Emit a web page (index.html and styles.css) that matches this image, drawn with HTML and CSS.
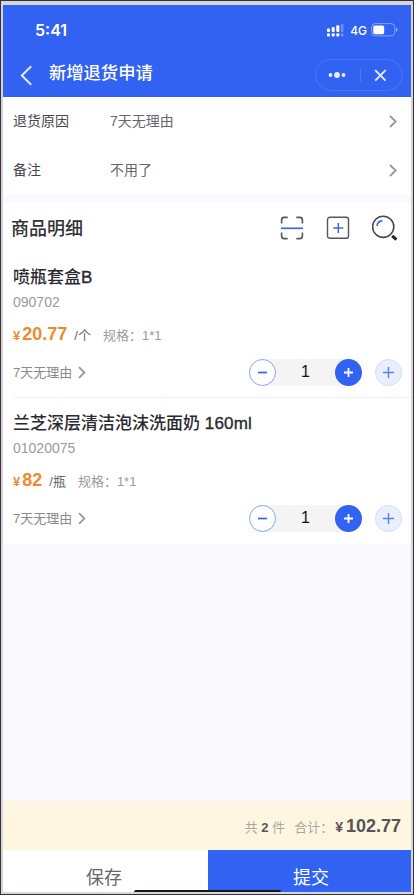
FILE: index.html
```html
<!DOCTYPE html>
<html lang="zh-CN">
<head>
<meta charset="utf-8">
<title>新增退货申请</title>
<link rel="stylesheet" href="styles.css">
</head>
<body>
<div class="frame">
<div class="screen">
  <header class="header">
    <div class="status">
      <span class="time">5:41</span>
      <svg class="signal" width="17" height="13" viewBox="0 0 17 13"><g fill="#fff"><rect x="0" y="4.5" width="3" height="3.5" rx="1"/><rect x="4.7" y="3" width="3" height="5" rx="1"/><rect x="9.3" y="1.2" width="3" height="6.8" rx="1"/><rect x="0" y="9.2" width="3" height="3.3" rx="1"/><rect x="4.7" y="9.2" width="3" height="3.3" rx="1"/><rect x="9.3" y="9.2" width="3" height="3.3" rx="1"/></g><g fill="#fff" opacity=".3"><rect x="13.8" y="0" width="2.6" height="8" rx="1"/><rect x="13.8" y="9.2" width="2.6" height="3.3" rx="1"/></g></svg>
      <span class="network">4G</span>
      <svg class="battery" width="27" height="14" viewBox="0 0 27 14"><rect x=".6" y=".6" width="23.2" height="12.3" rx="3.6" fill="none" stroke="#fff" stroke-opacity=".4"/><rect x="2.2" y="2.4" width="11" height="8.8" rx="1.6" fill="#fff"/><path d="M25 4.8q1.6.5 1.6 2t-1.6 2z" fill="#fff" opacity=".5"/></svg>
    </div>
    <div class="nav">
      <svg class="back" width="13" height="21" viewBox="0 0 13 21"><path d="M11.2 1.2 1.8 10.5l9.4 9.3" fill="none" stroke="#e9eeff" stroke-width="1.9"/></svg>
      <h1>新增退货申请</h1>
      <div class="capsule">
        <svg width="18" height="8" viewBox="0 0 18 8" fill="#e9eeff"><circle cx="2.5" cy="4" r="1.9"/><circle cx="9" cy="4" r="2.9"/><circle cx="15.5" cy="4" r="1.9"/></svg>
        <i></i>
        <svg width="13" height="13" viewBox="0 0 13 13"><path d="m1.2 1.2 10.4 10.4m0-10.4L1.2 11.6" stroke="#e9eeff" stroke-width="1.9"/></svg>
      </div>
    </div>
  </header>

  <section class="form">
    <div class="field"><label>退货原因</label><span>7天无理由</span><svg class="more" width="8" height="13" viewBox="0 0 8 13"><path d="m1 1 5.7 5.5L1 12"/></svg></div>
    <div class="field"><label>备注</label><span>不用了</span><svg class="more" width="8" height="13" viewBox="0 0 8 13"><path d="m1 1 5.7 5.5L1 12"/></svg></div>
  </section>

  <section class="goods">
    <div class="goods-head">
      <h2>商品明细</h2>
      <svg width="24" height="24" viewBox="0 0 24 24" fill="none" stroke="#55565c" stroke-width="1.6"><path d="M1.6 7.5V4q0-2.6 2.6-2.6H7.6M16.4 1.4h3.4Q22.4 1.4 22.4 4v3.5M22.4 16.5V20q0 2.6-2.6 2.6h-3.4M7.6 22.6H4.2Q1.6 22.6 1.6 20v-3.5"/><path d="M1 12.3h22" stroke="#3c68ee" stroke-width="1.7"/></svg>
      <svg width="24" height="24" viewBox="0 0 24 24" fill="none"><rect x="1.5" y="1.3" width="21" height="21" rx="2.4" stroke="#55565c" stroke-width="1.4"/><path d="M12.3 7v10M7.3 12h10" stroke="#3c68ee" stroke-width="1.5"/></svg>
      <svg width="26" height="26" viewBox="0 0 26 26" fill="none"><circle cx="11.2" cy="11.8" r="10.6" stroke="#46474d" stroke-width="1.6"/><path d="M4.9 11Q5.6 6.1 10.4 5.6" stroke="#3c68ee" stroke-width="1.6"/><path d="m20.2 20.8 4.2 3.8" stroke="#222328" stroke-width="3"/></svg>
    </div>

    <article class="item">
      <h3>喷瓶套盒<span>B</span></h3>
      <p class="code">090702</p>
      <div class="price"><small>¥</small><b>20.77</b><span class="unit">/个</span><span class="spec">规格：1*1</span></div>
      <div class="actions">
        <span class="reason">7天无理由</span>
        <svg class="more" width="8" height="13" viewBox="0 0 8 13"><path d="m1 1.2 5.4 5.3L1 11.8"/></svg>
        <div class="stepper">
          <button class="minus"><svg width="9" height="9" viewBox="0 0 9 9"><path d="M0 4.5h9"/></svg></button>
          <span>1</span>
          <button class="plus"><svg width="9" height="9" viewBox="0 0 9 9"><path d="M0 4.5h9M4.5 0v9"/></svg></button>
        </div>
        <button class="add"><svg width="11" height="11" viewBox="0 0 11 11"><path d="M0 5.5h11M5.5 0v11"/></svg></button>
      </div>
    </article>

    <article class="item">
      <h3>兰芝深层清洁泡沫洗面奶 <span>160ml</span></h3>
      <p class="code">01020075</p>
      <div class="price"><small>¥</small><b>82</b><span class="unit">/瓶</span><span class="spec">规格：1*1</span></div>
      <div class="actions">
        <span class="reason">7天无理由</span>
        <svg class="more" width="8" height="13" viewBox="0 0 8 13"><path d="m1 1.2 5.4 5.3L1 11.8"/></svg>
        <div class="stepper">
          <button class="minus"><svg width="9" height="9" viewBox="0 0 9 9"><path d="M0 4.5h9"/></svg></button>
          <span>1</span>
          <button class="plus"><svg width="9" height="9" viewBox="0 0 9 9"><path d="M0 4.5h9M4.5 0v9"/></svg></button>
        </div>
        <button class="add"><svg width="11" height="11" viewBox="0 0 11 11"><path d="M0 5.5h11M5.5 0v11"/></svg></button>
      </div>
    </article>
  </section>

  <footer class="footer">
    <div class="total"><span>共 <b>2</b> 件</span><span class="sum">合计：</span><small>¥</small><strong>102.77</strong></div>
    <div class="buttons"><button class="save">保存</button><button class="submit">提交</button></div>
    <div class="home-bar"></div>
  </footer>
</div>
</div>
</body>
</html>
```
FILE: styles.css
```css
* { box-sizing: border-box; }
body, h1, h2, h3, p { margin: 0; }
body { font-family: "Liberation Sans", "Noto Sans CJK SC", sans-serif; }
svg { display: block; flex: none; }
button { border: 0; padding: 0; margin: 0; font: inherit; display: flex; align-items: center; justify-content: center; }

.frame { height: 895px; border: 1px solid #3b3038; background: #d5d5dc; padding: 4px 2px 2px; }
.screen { height: 887px; display: flex; flex-direction: column; background: #f9f9fe; }

.header { height: 92px; background: #3162f1; color: #fff; }
.status { height: 50px; display: flex; align-items: center; padding: 0 13px 0 32px; }
.time { font: 600 16px "Inter", sans-serif; margin-right: auto; }
.network { font: 500 12px "Inter", sans-serif; margin: 0 4px 0 6px; }
.nav { height: 40px; display: flex; align-items: center; padding: 0 8px 0 17px; }
.nav h1 { font-size: 17.3px; font-weight: 500; line-height: 24px; margin: -4px auto 0 16px; }
.capsule { width: 88px; height: 32px; border: 1px solid #4a77f7; border-radius: 16px; display: flex; align-items: center; padding: 0 15px 0 12px; justify-content: space-between; }
.capsule i { width: 1px; height: 13px; background: #4a77f7; }

.form { height: 98px; background: #fff; }
.field { height: 49px; display: flex; align-items: center; padding: 0 14px 0 10px; font-size: 14px; color: #46474c; }
.field label { width: 97px; margin-top: -3px; }
.field span { flex: 1; color: #66676b; margin-top: -3px; }
.more path { fill: none; stroke: #999; stroke-width: 1.8; }

.goods { margin-top: 8px; background: #fff; }
.goods-head { height: 49px; display: flex; align-items: center; padding: 0 13px 0 8px; gap: 22px; }
.goods-head h2 { flex: 1; font-size: 18px; font-weight: 500; color: #303138; margin-top: -2px; }

.item { height: 146px; margin-left: 10px; padding: 13px 9px 0 0; display: flex; flex-direction: column; border-bottom: 1px solid #f1f1f5; }
.item:last-child { border-bottom: 0; }
.item h3 { height: 25px; line-height: 26px; font-size: 17px; font-weight: 500; color: #292a31; white-space: nowrap; }
.item h3 span { -webkit-text-stroke: .35px #292a31; letter-spacing: .2px; }
.code { height: 24px; line-height: 24px; font-size: 14px; color: #999a9e; }
.price { height: 42px; line-height: 40px; display: flex; align-items: baseline; font-size: 13px; color: #999a9e; }
.price small { font-size: 13px; font-weight: 700; color: #f08a2f; margin-right: 2px; }
.price b { font-size: 18px; color: #f08a2f; }
.unit { color: #66676b; margin: 0 12px 0 7px; }
.actions { height: 32px; display: flex; align-items: center; }
.reason { font-size: 13px; color: #88898f; margin: -2px 6px 0 0; }
.stepper { width: 113px; height: 27px; display: flex; align-items: center; margin-left: auto; background: #f4f4f5; border-radius: 13.5px; }
.stepper span { flex: 1; text-align: center; font-size: 16px; color: #111; }
.minus, .plus, .add { width: 27px; height: 27px; border-radius: 50%; }
.minus { background: #fff; border: 1px solid #8ba2ea; }
.minus path { stroke: #3162f1; stroke-width: 1.7; }
.plus { background: #3162f1; }
.plus path { stroke: #fff; stroke-width: 1.8; }
.add { margin-left: 13px; background: #e9effd; border: 1px solid #cfdcf8; }
.add path { stroke: #5a80ef; stroke-width: 1.4; }

.footer { margin-top: auto; position: relative; }
.total { height: 49px; background: #fef6e1; display: flex; align-items: baseline; justify-content: flex-end; padding-right: 10px; line-height: 51px; font-size: 13px; color: #a9a69f; }
.total b { color: #555; }
.sum { margin-left: 9px; }
.total small { font-size: 14px; font-weight: 700; color: #555; margin: 0 3px 0 2px; }
.total strong { font-size: 18px; color: #555; }
.buttons { height: 42px; display: grid; grid-template-columns: 205px 1fr; }
.buttons button { font-size: 18px; padding-top: 9px; }
.buttons .save { background: #fff; color: #66676b; padding-right: 3px; }
.buttons .submit { background: #3162f1; color: #fff; padding-left: 3px; }
.home-bar { position: absolute; left: 131px; bottom: 0; width: 147px; height: 2px; background: #15161c; border-radius: 2px 2px 0 0; }
```
